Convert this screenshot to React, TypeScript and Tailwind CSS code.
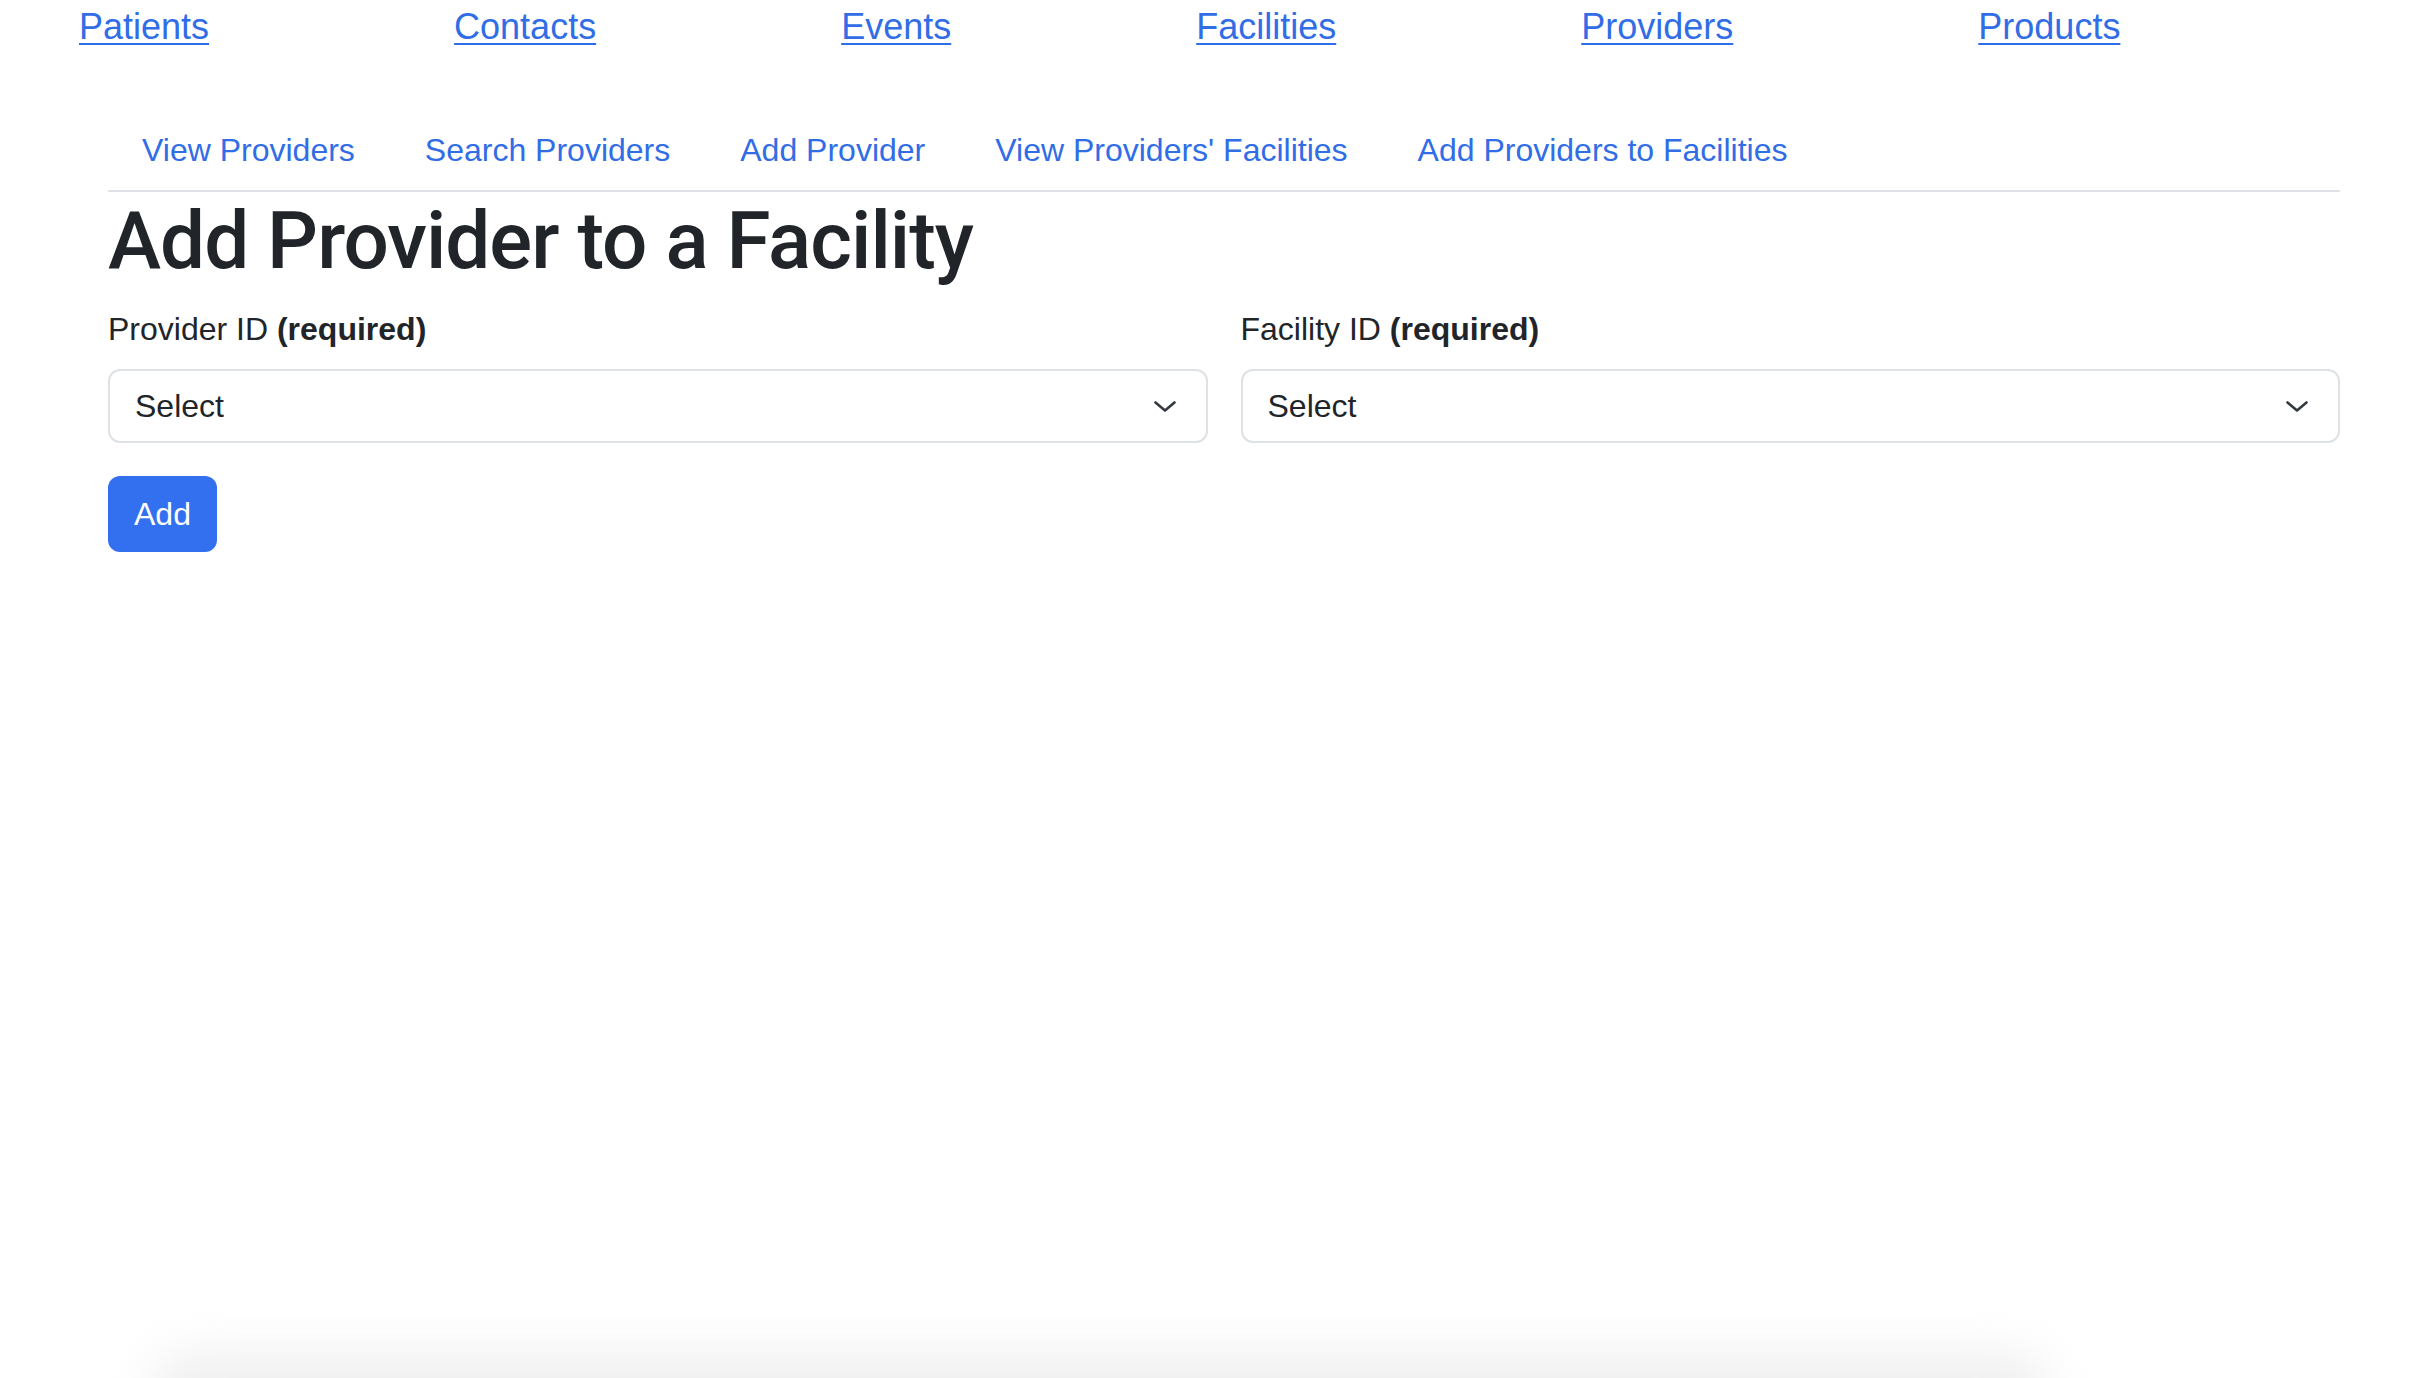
const TOP_LINKS = ['Patients', 'Contacts', 'Events', 'Facilities', 'Providers', 'Products']

const SUB_LINKS = [
  'View Providers',
  'Search Providers',
  'Add Provider',
  "View Providers' Facilities",
  'Add Providers to Facilities',
]

function Chevron() {
  return (
    <svg width="22" height="11" viewBox="0 0 22 11" fill="none" className="shrink-0">
      <path d="M1.5 1.5 L11 9.5 L20.5 1.5" stroke="#343a40" strokeWidth="2.6" strokeLinecap="round" strokeLinejoin="round" />
    </svg>
  )
}

function SelectBox() {
  return (
    <div className="flex h-[74px] items-center justify-between rounded-[12px] border-2 border-[#dee2e6] bg-white pl-[25px] pr-[30px]">
      <span className="text-[32px] leading-[48px] text-[#212529]">Select</span>
      <Chevron />
    </div>
  )
}

function Field({ label }: { label: string }) {
  return (
    <div className="flex flex-col">
      <label className="mb-[16px] text-[32px] leading-[48px] text-[#212529]">
        {label} <b className="font-bold">(required)</b>
      </label>
      <SelectBox />
    </div>
  )
}

export default function App() {
  return (
    <div className="relative h-[1378px] overflow-hidden bg-white font-['Liberation_Sans',Arial,sans-serif] text-[#212529]">
      <ul className="flex h-[54px] gap-[245px] pl-[79px]">
        {TOP_LINKS.map((l) => (
          <li key={l}>
            <a href="#" className="text-[36px] leading-[54px] text-[#316de6] underline decoration-2 underline-offset-[4px]">
              {l}
            </a>
          </li>
        ))}
      </ul>

      <div className="ml-[108px] w-[2232px]">
        <ul className="mt-[56px] flex gap-[2px] border-b-2 border-[#dee2e6]">
          {SUB_LINKS.map((l) => (
            <li key={l}>
              <a href="#" className="block px-[34px] py-[16px] text-[32px] leading-[48px] text-[#316de6]">
                {l}
              </a>
            </li>
          ))}
        </ul>

        <h1 className="mt-[1px] mb-[16px] font-['Roboto',sans-serif] text-[80px] leading-[96px] font-medium tracking-[-1px] text-[#212529]">
          Add Provider to a Facility
        </h1>

        <div className="grid grid-cols-2 gap-x-[33px]">
          <Field label="Provider ID" />
          <Field label="Facility ID" />
        </div>

        <button className="mt-[33px] h-[76px] rounded-[12px] bg-[#3270f0] px-[26px] text-[32px] leading-[48px] text-white">
          Add
        </button>
      </div>

      <div className="pointer-events-none absolute bottom-[-56px] left-[150px] h-[80px] w-[1900px] rounded-full bg-[#efefef] blur-[24px]" />
    </div>
  )
}
